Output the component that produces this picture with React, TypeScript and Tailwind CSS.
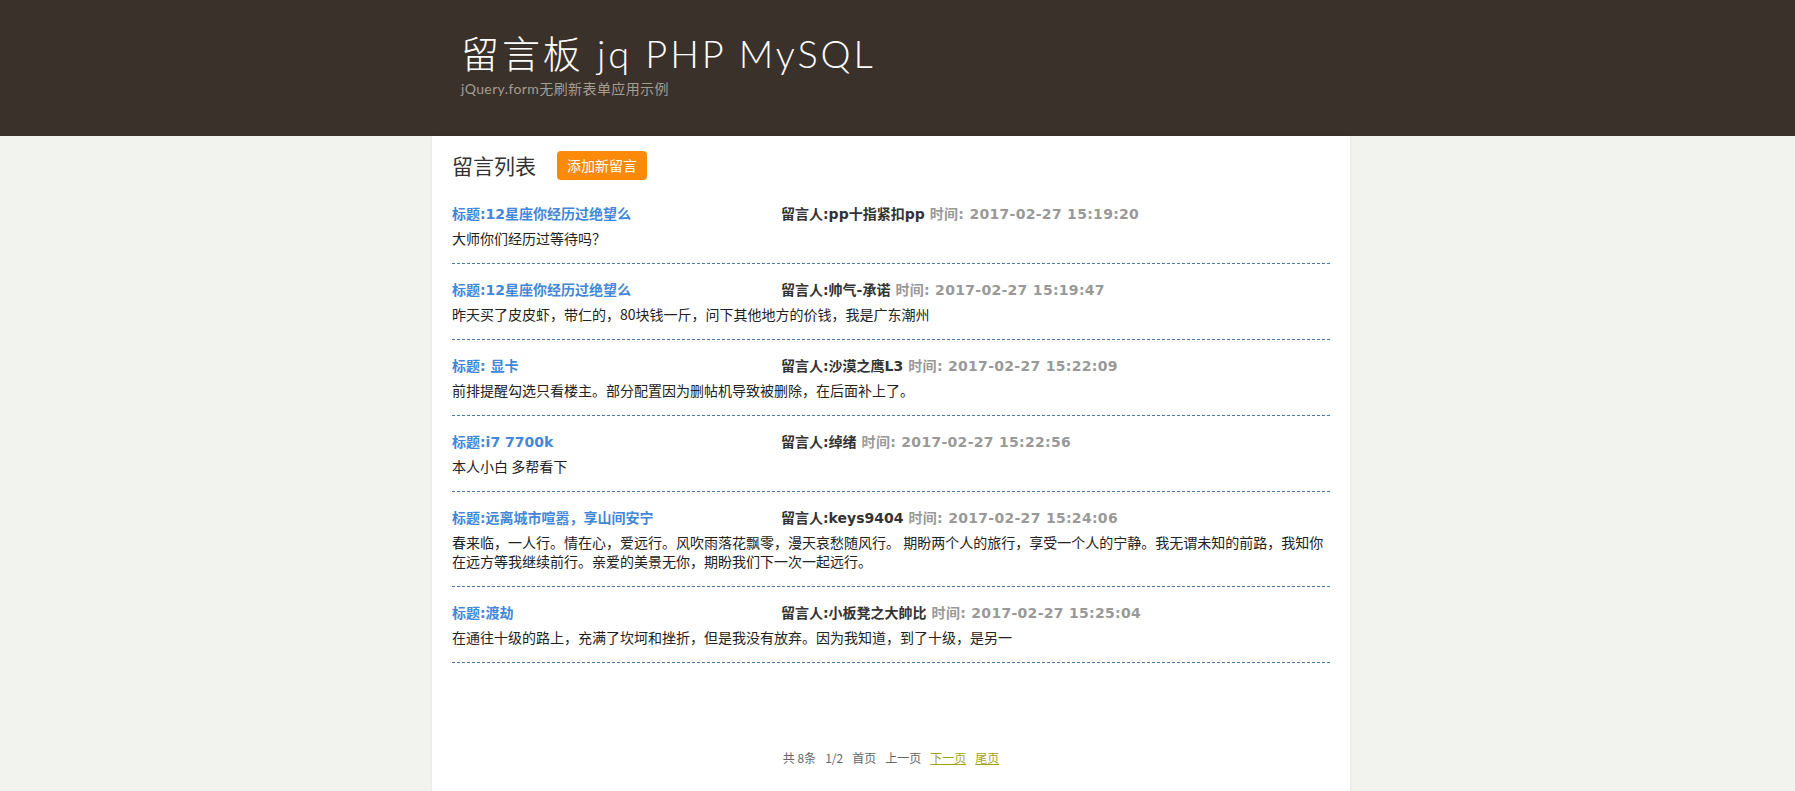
const messages = [
  {
    title: "标题:12星座你经历过绝望么",
    author: "pp十指紧扣pp",
    time: "2017-02-27 15:19:20",
    body: "大师你们经历过等待吗？",
  },
  {
    title: "标题:12星座你经历过绝望么",
    author: "帅气-承诺",
    time: "2017-02-27 15:19:47",
    body: "昨天买了皮皮虾，带仁的，80块钱一斤，问下其他地方的价钱，我是广东潮州",
  },
  {
    title: "标题: 显卡",
    author: "沙漠之鹰L3",
    time: "2017-02-27 15:22:09",
    body: "前排提醒勾选只看楼主。部分配置因为删帖机导致被删除，在后面补上了。",
  },
  {
    title: "标题:i7 7700k",
    author: "绰绪",
    time: "2017-02-27 15:22:56",
    body: "本人小白 多帮看下",
  },
  {
    title: "标题:远离城市喧嚣，享山间安宁",
    author: "keys9404",
    time: "2017-02-27 15:24:06",
    body: "春来临，一人行。情在心，爱远行。风吹雨落花飘零，漫天哀愁随风行。 期盼两个人的旅行，享受一个人的宁静。我无谓未知的前路，我知你在远方等我继续前行。亲爱的美景无你，期盼我们下一次一起远行。",
  },
  {
    title: "标题:渡劫",
    author: "小板凳之大帥比",
    time: "2017-02-27 15:25:04",
    body: "在通往十级的路上，充满了坎坷和挫折，但是我没有放弃。因为我知道，到了十级，是另一",
  },
];

export default function App() {
  return (
    <div className="min-h-screen bg-[#f2f2ee] font-['Noto_Sans_CJK_SC',sans-serif]">
      {/* Header */}
      <header className="h-[136px] bg-[#3a312b]">
        <div className="ml-[432px] pl-[29px] pt-[31px]">
          <h1 className="font-['Lato','Noto_Sans_CJK_SC',sans-serif] text-[38px] font-light leading-[44px] tracking-[2.9px] text-white">
            留言板 jq PHP MySQL
          </h1>
          <p className="mt-[4px] font-['Lato','Noto_Sans_CJK_SC',sans-serif] text-[14px] leading-[20px] tracking-[0.4px] text-[#a39d92]">
            jQuery.form无刷新表单应用示例
          </p>
        </div>
      </header>

      {/* Panel */}
      <main className="ml-[432px] min-h-[655px] w-[918px] bg-white px-[20px] pt-[15px] pb-6 shadow-[0_0_4px_rgba(0,0,0,0.06)]">
        <div className="mb-[8px] flex items-center gap-[21px]">
          <h2 className="text-[21px] font-normal leading-[29px] text-[#333]">留言列表</h2>
          <button className="h-[29px] rounded-[4px] bg-[#fb8a0b] px-[10px] text-[14px] leading-[29px] text-white">
            添加新留言
          </button>
        </div>

        <ul>
          {messages.map((m, i) => (
            <li key={i} className="border-b border-dashed border-[#4d78a3] pt-[16px] pb-[15px]">
              <div className="flex h-[20px] items-center text-[14px] font-bold leading-[20px]">
                <span className="w-[329px] font-['DejaVu_Sans','Noto_Sans_CJK_SC',sans-serif] text-[#4287d9]">
                  {m.title}
                </span>
                <span className="font-['DejaVu_Sans','Noto_Sans_CJK_SC',sans-serif] text-[#333]">
                  留言人:{m.author}
                </span>
                <span className="ml-[5px] font-['DejaVu_Sans','Noto_Sans_CJK_SC',sans-serif] tracking-[0.3px] text-[#999]">
                  时间: {m.time}
                </span>
              </div>
              <p className="mt-[5px] text-[14px] leading-[19px] text-[#222]">{m.body}</p>
            </li>
          ))}
        </ul>

        <div className="mt-[85px] flex justify-center gap-[9px] text-[12px] leading-[20px] text-[#666]">
          <span>共 8条</span>
          <span>1/2</span>
          <span>首页</span>
          <span>上一页</span>
          <a href="#" className="text-[#a4a313] underline">下一页</a>
          <a href="#" className="text-[#a4a313] underline">尾页</a>
        </div>
      </main>
    </div>
  );
}
